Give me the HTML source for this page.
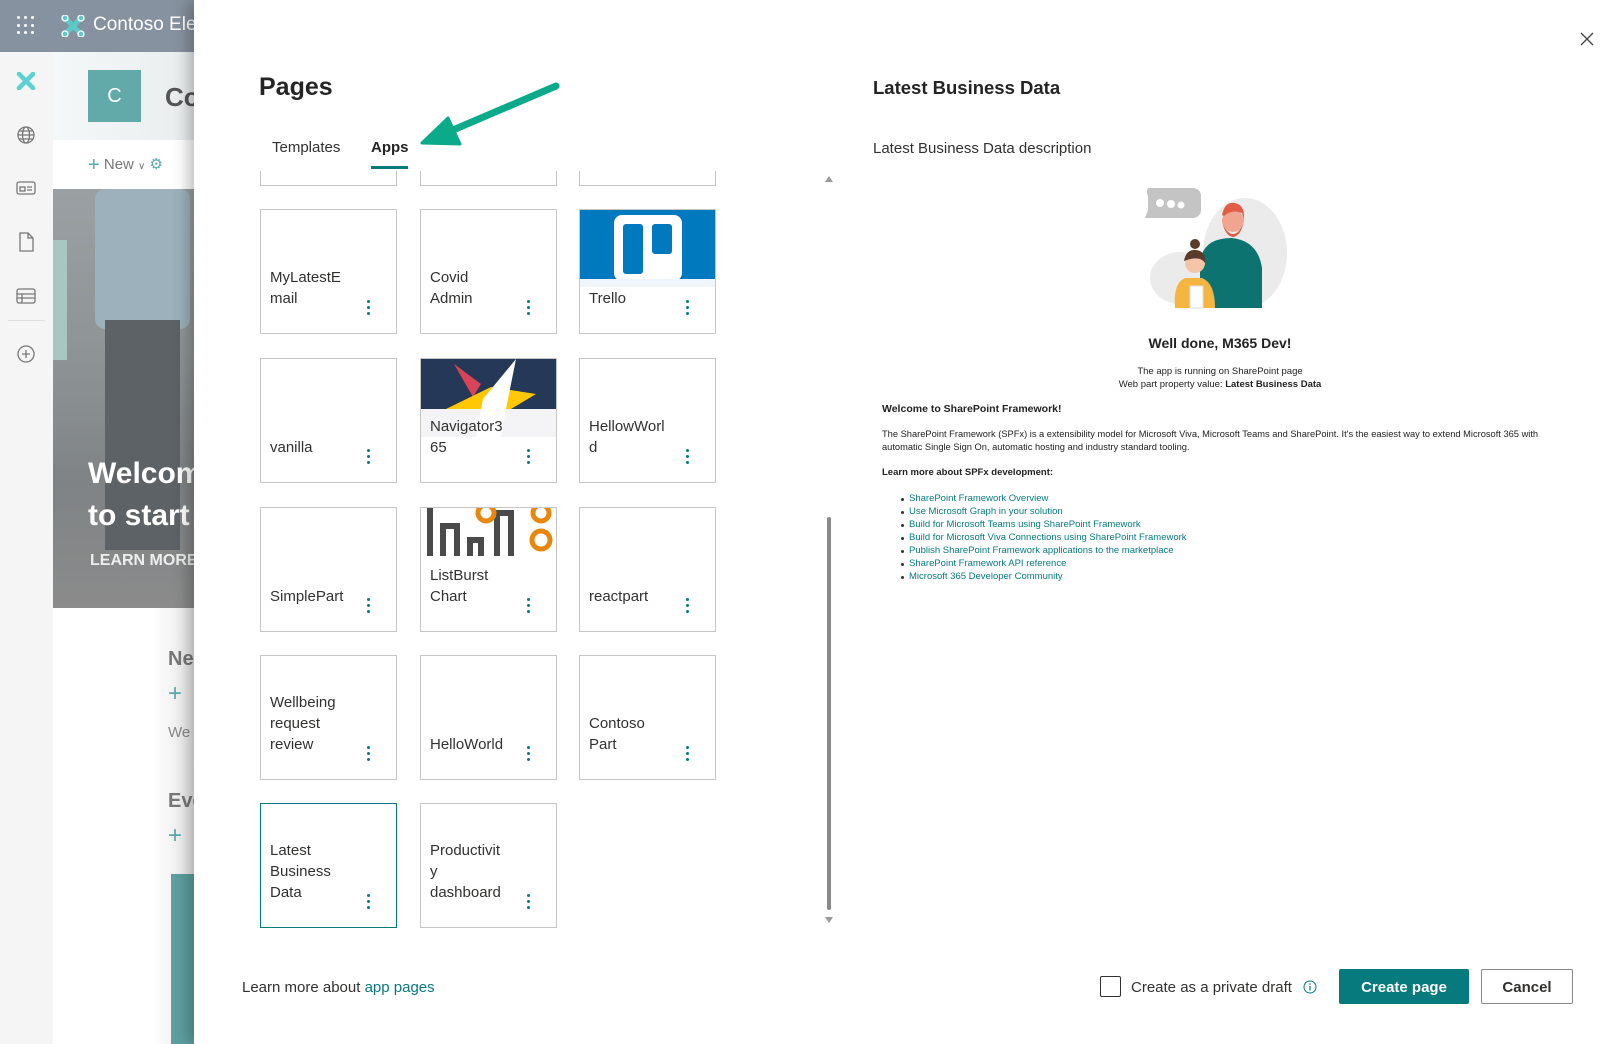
<!DOCTYPE html>
<html><head><meta charset="utf-8"><style>
*{margin:0;padding:0;box-sizing:border-box}
body{width:1621px;height:1044px;overflow:hidden;position:relative;font-family:"Segoe UI","Liberation Sans",sans-serif;background:#fff;color:#323130}
.a{position:absolute}
.card{position:absolute;width:137px;height:125px;border:1px solid #c8c6c4;background:#fff;overflow:hidden}
.card .t{position:absolute;left:9px;bottom:24px;font-size:15px;line-height:21px;color:#323130;white-space:nowrap}
.card .d{position:absolute;left:106px;top:90px;width:3px;height:16px}
.card .d i{display:block;width:3px;height:3px;border-radius:50%;background:#077a7e;margin-bottom:3px}
.li{position:absolute;left:909px;font-size:9.5px;color:#077a7e;white-space:nowrap}
.li:before{content:"";position:absolute;left:-8px;top:5px;width:3px;height:3px;border-radius:50%;background:#333}
</style></head><body>
<div class="a" style="left:0;top:0;width:194px;height:52px;background:#8792a0"></div>
<div class="a" style="left:17px;top:16px;width:20px;height:20px;display:grid;grid-template-columns:repeat(3,4px);gap:3px">
<i style="background:#fff;border-radius:50%;width:3px;height:3px"></i><i style="background:#fff;border-radius:50%;width:3px;height:3px"></i><i style="background:#fff;border-radius:50%;width:3px;height:3px"></i><i style="background:#fff;border-radius:50%;width:3px;height:3px"></i><i style="background:#fff;border-radius:50%;width:3px;height:3px"></i><i style="background:#fff;border-radius:50%;width:3px;height:3px"></i><i style="background:#fff;border-radius:50%;width:3px;height:3px"></i><i style="background:#fff;border-radius:50%;width:3px;height:3px"></i><i style="background:#fff;border-radius:50%;width:3px;height:3px"></i></div>
<svg class="a" style="left:61px;top:15px" width="24" height="22" viewBox="0 0 24 22"><path d="M4 3 L20 19 M20 3 L4 19" stroke="#5cc9c9" stroke-width="5" stroke-linecap="round"/><circle cx="4" cy="3" r="3" fill="none" stroke="#fff" stroke-width="1.3"/><circle cx="20" cy="3" r="3" fill="none" stroke="#fff" stroke-width="1.3"/><circle cx="4" cy="19" r="3" fill="none" stroke="#fff" stroke-width="1.3"/><circle cx="20" cy="19" r="3" fill="none" stroke="#fff" stroke-width="1.3"/></svg>
<div class="a" style="left:93px;top:14px;font-size:19px;color:#fff;white-space:nowrap;width:101px;overflow:hidden">Contoso Electronics</div>
<div class="a" style="left:0;top:52px;width:53px;height:992px;background:#f5f5f5"></div>
<svg class="a" style="left:16px;top:72px" width="20" height="18"><path d="M3 2 L17 16 M17 2 L3 16" stroke="#5cd1d1" stroke-width="4.5" stroke-linecap="round"/></svg>
<svg class="a" style="left:15px;top:124px" width="22" height="22" fill="none" stroke="#777" stroke-width="1.3"><circle cx="11" cy="11" r="8"/><ellipse cx="11" cy="11" rx="3.5" ry="8"/><path d="M3 11h16M4.5 7h13M4.5 15h13"/></svg>
<svg class="a" style="left:15px;top:179px" width="22" height="18" fill="none" stroke="#777" stroke-width="1.3"><rect x="2" y="3" width="18" height="12" rx="2"/><rect x="5" y="8" width="5" height="4"/><path d="M12 8h5M12 11h5"/></svg>
<svg class="a" style="left:17px;top:231px" width="18" height="22" fill="none" stroke="#777" stroke-width="1.3"><path d="M3 2h8l5 5v13H3z"/><path d="M11 2v5h5"/></svg>
<svg class="a" style="left:15px;top:287px" width="22" height="18" fill="none" stroke="#777" stroke-width="1.3"><rect x="2" y="2" width="18" height="14" rx="2"/><path d="M2 7h18M2 11h18M7 7v9"/></svg>
<div class="a" style="left:8px;top:320px;width:37px;height:1px;background:#e1e1e1"></div>
<svg class="a" style="left:15px;top:343px" width="22" height="22" fill="none" stroke="#777" stroke-width="1.3"><circle cx="11" cy="11" r="8"/><path d="M11 7v8M7 11h8"/></svg>
<div class="a" style="left:53px;top:52px;width:141px;height:88px;background:linear-gradient(90deg,#f4f8f8,#e9eded)"></div>
<div class="a" style="left:88px;top:70px;width:53px;height:52px;background:#62a9aa;color:#fff;font-size:20px;text-align:center;line-height:52px">C</div>
<div class="a" style="left:165px;top:82px;font-size:26px;color:#555;font-weight:600">Co</div>
<div class="a" style="left:88px;top:154px;font-size:15px;color:#777;white-space:nowrap"><span style="color:#5aa9a9;font-size:20px;vertical-align:-2px">+</span> New <span style="font-size:10px">&#8744;</span> <span style="color:#5aa9a9">&#9881;</span></div>
<div class="a" style="left:53px;top:189px;width:141px;height:419px;background:linear-gradient(180deg,#9aa0a3 0%,#8e9496 40%,#7f8385 70%,#8b8b8b 100%)"></div>
<div class="a" style="left:53px;top:240px;width:14px;height:120px;background:#a8c6c2"></div>
<div class="a" style="left:95px;top:189px;width:95px;height:140px;background:#9cb1bb;border-radius:10px"></div>
<div class="a" style="left:105px;top:320px;width:75px;height:230px;background:#5d6266"></div>
<div class="a" style="left:88px;top:453px;font-size:30px;font-weight:700;color:#fff;line-height:42px;white-space:nowrap">Welcome<br>to start</div>
<div class="a" style="left:90px;top:552px;font-size:16px;font-weight:700;color:#eee;white-space:nowrap">LEARN MORE</div>
<div class="a" style="left:53px;top:608px;width:141px;height:436px;background:linear-gradient(90deg,#fff 70%,#e8e8e8)"></div>
<div class="a" style="left:168px;top:648px;font-size:20px;font-weight:600;color:#777">Ne</div>
<div class="a" style="left:168px;top:682px;font-size:24px;color:#5aa9a9;line-height:24px">+</div>
<div class="a" style="left:168px;top:724px;font-size:15px;color:#888">We</div>
<div class="a" style="left:168px;top:790px;font-size:20px;font-weight:600;color:#777">Eve</div>
<div class="a" style="left:168px;top:824px;font-size:24px;color:#5aa9a9;line-height:24px">+</div>
<div class="a" style="left:171px;top:874px;width:23px;height:170px;background:#5e9fa0"></div>

<div class="a" style="left:194px;top:0;width:1427px;height:1044px;background:#fff;box-shadow:-6px 0 14px rgba(0,0,0,.25)"></div>
<svg class="a" style="left:1580px;top:32px" width="14" height="14"><path d="M1 1L13 13M13 1L1 13" stroke="#444" stroke-width="1.3"/></svg>
<div class="a" style="left:259px;top:73px;font-size:25px;font-weight:600;color:#242424">Pages</div>
<div class="a" style="left:272px;top:139px;font-size:15px;color:#323130">Templates</div>
<div class="a" style="left:371px;top:139px;font-size:15px;color:#242424;font-weight:600">Apps</div>
<div class="a" style="left:371px;top:166px;width:37px;height:3px;background:#077a7e"></div>
<svg class="a" style="left:410px;top:75px" width="160" height="80"><path d="M146 11 L36 58" stroke="#0aaa8a" stroke-width="7" stroke-linecap="round"/><path d="M12 68 L38 43 L50 69Z" fill="#0aaa8a" stroke="#0aaa8a" stroke-width="3" stroke-linejoin="round"/></svg>

<div class="a" style="left:255px;top:171px;width:560px;height:760px;overflow:hidden">
<div class="card" style="left:5px;top:-110px"></div>
<div class="card" style="left:165px;top:-110px"></div>
<div class="card" style="left:324px;top:-110px"></div>

<div class="card" style="left:5px;top:38px"><div class="t">MyLatestE<br>mail</div><div class="d"><i></i><i></i><i></i></div></div>
<div class="card" style="left:165px;top:38px"><div class="t">Covid<br>Admin</div><div class="d"><i></i><i></i><i></i></div></div>
<div class="card" style="left:324px;top:38px"><div class="a" style="left:0;top:0;width:137px;height:69px;background:#0079bf"></div><div class="a" style="left:34px;top:5px;width:68px;height:66px;background:#fff;border-radius:8px"></div><div class="a" style="left:43px;top:14px;width:20px;height:50px;background:#0079bf;border-radius:3px"></div><div class="a" style="left:72px;top:14px;width:20px;height:30px;background:#0079bf;border-radius:3px"></div><div class="a" style="left:0;top:69px;width:137px;height:8px;background:#f0f5f9"></div><div class="t">Trello</div><div class="d"><i></i><i></i><i></i></div></div>

<div class="card" style="left:5px;top:187px"><div class="t">vanilla</div><div class="d"><i></i><i></i><i></i></div></div>
<div class="card" style="left:165px;top:187px"><svg class="a" style="left:0;top:0" width="137" height="78"><rect width="137" height="50" fill="#253858"/><rect y="50" width="137" height="28" fill="#f4f4f6"/><path d="M33 5 L60 25 L52 38Z" fill="#d94456"/><path d="M25 50 L70 28 L115 35 L90 50Z" fill="#ffc800"/><path d="M95 0 L85 50 L80 78 L55 78 L62 40Z" fill="#fff"/></svg><div class="t">Navigator3<br>65</div><div class="d"><i></i><i></i><i></i></div></div>
<div class="card" style="left:324px;top:187px"><div class="t">HellowWorl<br>d</div><div class="d"><i></i><i></i><i></i></div></div>

<div class="card" style="left:5px;top:336px"><div class="t">SimplePart</div><div class="d"><i></i><i></i><i></i></div></div>
<div class="card" style="left:165px;top:336px"><svg class="a" style="left:0;top:0" width="137" height="80"><g fill="none" stroke="#4a4a4a" stroke-width="6"><path d="M9 0V48M22 48V18H36V48M49 48V32H60V48M76 48V5H90V48"/></g><g fill="none" stroke="#e8870d" stroke-width="5"><circle cx="65" cy="5" r="8"/><circle cx="120" cy="5" r="8"/><circle cx="120" cy="32" r="9"/></g><rect y="48" width="137" height="32" fill="#fff" opacity=".85"/></svg><div class="t">ListBurst<br>Chart</div><div class="d"><i></i><i></i><i></i></div></div>
<div class="card" style="left:324px;top:336px"><div class="t">reactpart</div><div class="d"><i></i><i></i><i></i></div></div>

<div class="card" style="left:5px;top:484px"><div class="t">Wellbeing<br>request<br>review</div><div class="d"><i></i><i></i><i></i></div></div>
<div class="card" style="left:165px;top:484px"><div class="t">HelloWorld</div><div class="d"><i></i><i></i><i></i></div></div>
<div class="card" style="left:324px;top:484px"><div class="t">Contoso<br>Part</div><div class="d"><i></i><i></i><i></i></div></div>

<div class="card" style="left:5px;top:632px;border-color:#077a7e"><div class="t">Latest<br>Business<br>Data</div><div class="d"><i></i><i></i><i></i></div></div>
<div class="card" style="left:165px;top:632px"><div class="t">Productivit<br>y<br>dashboard</div><div class="d"><i></i><i></i><i></i></div></div>
</div>
<div class="a" style="left:825px;top:176px;width:0;height:0;border-left:4px solid transparent;border-right:4px solid transparent;border-bottom:6px solid #999"></div>
<div class="a" style="left:827px;top:517px;width:4px;height:393px;background:#8a8a8a;border-radius:2px"></div>
<div class="a" style="left:825px;top:917px;width:0;height:0;border-left:4px solid transparent;border-right:4px solid transparent;border-top:6px solid #999"></div>

<div class="a" style="left:242px;top:979px;font-size:15px;color:#323130">Learn more about <span style="color:#077a7e">app pages</span></div>

<div class="a" style="left:873px;top:77px;font-size:18.5px;font-weight:600;color:#242424">Latest Business Data</div>
<div class="a" style="left:873px;top:140px;font-size:15px;color:#323130">Latest Business Data description</div>
<svg class="a" style="left:1140px;top:183px" width="160" height="130">
<ellipse cx="105" cy="70" rx="42" ry="55" fill="#ebebeb"/><ellipse cx="40" cy="95" rx="30" ry="26" fill="#ebebeb"/>
<path d="M8 5h45a8 8 0 0 1 8 8v14a8 8 0 0 1-8 8H5l3-8V13a8 8 0 0 1 0-8z" fill="#c4c4c4"/>
<circle cx="20" cy="20" r="4" fill="#fff"/><circle cx="31" cy="21" r="4" fill="#fff"/><circle cx="41" cy="22" r="3.5" fill="#fff"/>
<path d="M60 125 V80 Q62 55 92 55 Q118 58 122 85 V125Z" fill="#0d7370"/>
<circle cx="93" cy="38" r="11" fill="#f0a590"/><path d="M82 32 Q85 18 95 20 Q105 22 104 36 L102 30 Q92 26 84 33Z" fill="#e05e48"/><path d="M83 42 Q93 60 103 42 Q100 53 93 54 Q86 53 83 42Z" fill="#e05e48"/>
<path d="M35 125 Q33 100 45 95 L62 95 Q75 100 75 125Z" fill="#f5b540"/>
<circle cx="55" cy="80" r="10" fill="#f4c5a8"/><path d="M44 78 Q46 66 56 67 Q66 68 65 80 Q60 72 44 78Z" fill="#5b3b2a"/><circle cx="55" cy="61" r="5" fill="#5b3b2a"/>
<rect x="50" y="103" width="13" height="22" fill="#fff" stroke="#ddd"/>
</svg>
<div class="a" style="left:1020px;top:335px;width:400px;text-align:center;font-size:14px;font-weight:700;color:#222">Well done, M365 Dev!</div>
<div class="a" style="left:1020px;top:365px;width:400px;text-align:center;font-size:9.5px;line-height:13px;color:#222">The app is running on SharePoint page<br>Web part property value: <b>Latest Business Data</b></div>
<div class="a" style="left:882px;top:403px;font-size:10.5px;font-weight:700;color:#222">Welcome to SharePoint Framework!</div>
<div class="a" style="left:882px;top:428px;width:680px;font-size:9.3px;line-height:13px;color:#222">The SharePoint Framework (SPFx) is a extensibility model for Microsoft Viva, Microsoft Teams and SharePoint. It's the easiest way to extend Microsoft 365 with automatic Single Sign On, automatic hosting and industry standard tooling.</div>
<div class="a" style="left:882px;top:467px;font-size:9.5px;font-weight:700;color:#222">Learn more about SPFx development:</div>
<div class="li" style="top:493px">SharePoint Framework Overview</div>
<div class="li" style="top:506px">Use Microsoft Graph in your solution</div>
<div class="li" style="top:519px">Build for Microsoft Teams using SharePoint Framework</div>
<div class="li" style="top:532px">Build for Microsoft Viva Connections using SharePoint Framework</div>
<div class="li" style="top:545px">Publish SharePoint Framework applications to the marketplace</div>
<div class="li" style="top:558px">SharePoint Framework API reference</div>
<div class="li" style="top:571px">Microsoft 365 Developer Community</div>

<div class="a" style="left:1100px;top:976px;width:21px;height:21px;border:1px solid #323130;border-radius:2px"></div>
<div class="a" style="left:1131px;top:979px;font-size:15px;color:#323130">Create as a private draft</div>
<svg class="a" style="left:1303px;top:980px" width="14" height="14"><circle cx="7" cy="7" r="6" fill="none" stroke="#077a7e"/><path d="M7 6v4.5" stroke="#077a7e" stroke-width="1.2"/><circle cx="7" cy="4" r=".8" fill="#077a7e"/></svg>
<div class="a" style="left:1339px;top:969px;width:130px;height:35px;background:#077a7e;border-radius:2px;color:#fff;font-size:15px;font-weight:600;text-align:center;line-height:37px">Create page</div>
<div class="a" style="left:1481px;top:969px;width:92px;height:35px;border:1px solid #8a8886;border-radius:2px;color:#323130;font-size:15px;font-weight:600;text-align:center;line-height:35px">Cancel</div>
</body></html>
